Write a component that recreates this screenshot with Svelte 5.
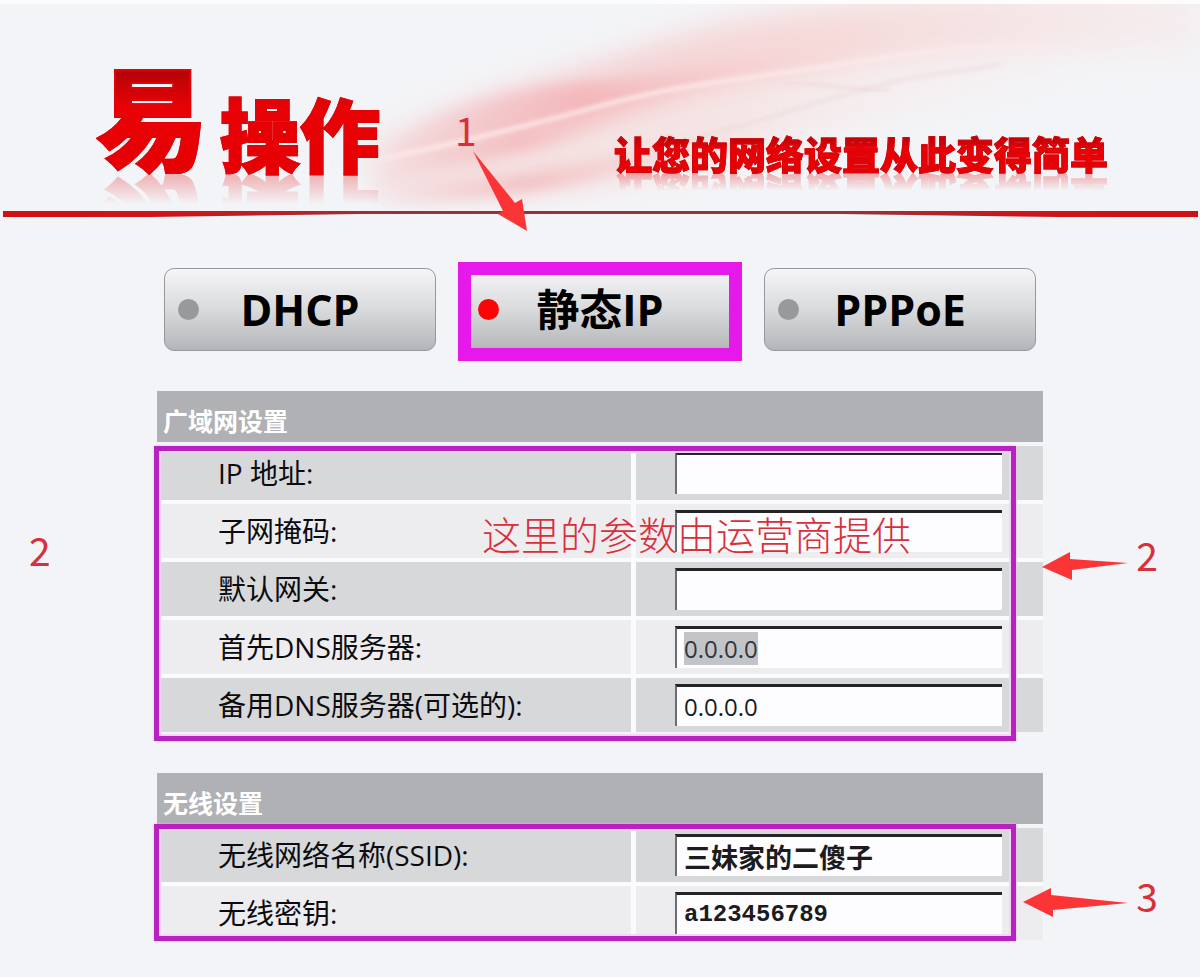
<script lang="ts">
  import { onMount } from 'svelte';

  const modes = ['DHCP', '静态IP', 'PPPoE'];
  let mode = $state('静态IP');

  let wan = $state([
    { id: 'ip', label: 'IP 地址:', value: '' },
    { id: 'mask', label: '子网掩码:', value: '' },
    { id: 'gateway', label: '默认网关:', value: '' },
    { id: 'dns1', label: '首先DNS服务器:', value: '0.0.0.0' },
    { id: 'dns2', label: '备用DNS服务器(可选的):', value: '0.0.0.0' }
  ]);

  let wifi = $state([
    { id: 'ssid', label: '无线网络名称(SSID):', value: '三妹家的二傻子' },
    { id: 'key', label: '无线密钥:', value: 'a123456789' }
  ]);

  onMount(() => {
    const dns = document.getElementById('dns1') as HTMLInputElement;
    dns.focus();
    dns.select();
  });
</script>

<div class="page">
  <header>
    <svg class="waves" viewBox="0 0 1200 211" preserveAspectRatio="none" aria-hidden="true">
      <defs>
        <linearGradient id="veil" x1="0" x2="1" y1="0" y2="0">
          <stop offset="0" stop-color="#f6b9bb" stop-opacity="0.2" />
          <stop offset="0.3" stop-color="#f6b8b9" stop-opacity="0.55" />
          <stop offset="0.6" stop-color="#f8cbc9" stop-opacity="0.6" />
          <stop offset="1" stop-color="#f7e4e3" stop-opacity="0.4" />
        </linearGradient>
        <linearGradient id="haze" x1="0" x2="1" y1="0" y2="0">
          <stop offset="0" stop-color="#f6c4c4" stop-opacity="0.5" />
          <stop offset="0.5" stop-color="#f8dcda" stop-opacity="0.5" />
          <stop offset="1" stop-color="#f7efef" stop-opacity="0" />
        </linearGradient>
        <linearGradient id="fold" x1="0" x2="1" y1="0" y2="0">
          <stop offset="0" stop-color="#f3a6a9" stop-opacity="0.1" />
          <stop offset="0.35" stop-color="#f2a3a7" stop-opacity="0.55" />
          <stop offset="1" stop-color="#f9dedd" stop-opacity="0" />
        </linearGradient>
        <filter id="soft"><feGaussianBlur stdDeviation="14" /></filter>
        <filter id="mid"><feGaussianBlur stdDeviation="7" /></filter>
        <filter id="thin"><feGaussianBlur stdDeviation="2" /></filter>
      </defs>
      <path d="M370 170C500 110 620 90 800 60S1000 45 1180 60C1000 85 860 120 760 150C620 195 480 205 380 195Z" fill="url(#haze)" filter="url(#soft)" />
      <path d="M350 150C470 85 560 75 640 45C740 10 850 -10 1200 -20V50C1100 45 930 50 850 60C700 85 500 150 370 168Z" fill="url(#veil)" filter="url(#soft)" />
      <path d="M380 150C440 100 520 80 620 78C760 60 860 30 960 30C900 60 800 70 720 80C620 105 500 140 380 158Z" fill="url(#fold)" filter="url(#mid)" />
      <path d="M400 160C500 140 600 108 740 78C720 98 640 108 560 140C520 152 450 165 400 168Z" fill="url(#fold)" filter="url(#mid)" />
      <path d="M380 195C500 180 560 168 640 150C700 135 740 120 800 110C760 140 690 150 610 175C520 198 440 200 380 200Z" fill="url(#fold)" filter="url(#mid)" />
      <path d="M380 158C440 146 520 126 600 104S720 80 850 60S980 45 1050 42" fill="none" stroke="#fdeaea" stroke-width="4" filter="url(#thin)" />
      <path d="M700 135C760 120 800 105 860 88S930 74 1000 62" fill="none" stroke="#ecd8d8" stroke-width="2" filter="url(#thin)" />
      <path d="M780 80C820 80 850 88 890 88" fill="none" stroke="#f0d4d4" stroke-width="2" filter="url(#thin)" />
    </svg>
    <h1><span class="lead">易</span><span>操作</span></h1>
    <p class="slogan">让您的网络设置从此变得简单</p>
  </header>

  <svg class="rule" viewBox="0 0 1200 6" preserveAspectRatio="none" aria-hidden="true">
    <defs>
      <linearGradient id="rule">
        <stop offset="0" stop-color="#cf1014" />
        <stop offset="0.15" stop-color="#cc161b" />
        <stop offset="0.35" stop-color="#91343b" />
        <stop offset="0.7" stop-color="#91343b" />
        <stop offset="0.85" stop-color="#cc161b" />
        <stop offset="1" stop-color="#cf1014" />
      </linearGradient>
    </defs>
    <path d="M3 0H1198V6H1060L840 3H360L150 6H3Z" fill="url(#rule)" />
  </svg>

  <main>
    <div class="modes">
      {#each modes as name}
        <button type="button" class:active={mode === name} onclick={() => (mode = name)}>
          <i class="lamp"></i>
          <span>{name}</span>
        </button>
      {/each}
      <span class="note step-1">1</span>
      <svg class="arrow arrow-1" viewBox="0 0 54 80" aria-hidden="true">
        <path d="M0 0L42 52L49 48L54 80L25 63L30 60Z" />
      </svg>
    </div>

    <section>
      <h2>广域网设置</h2>
      <div class="fields">
        {#each wan as field}
          <div class="row">
            <label for={field.id}>{field.label}</label>
            <div class="cell"><input type="text" id={field.id} bind:value={field.value} /></div>
          </div>
        {/each}
        <div class="frame wan-frame"></div>
        <span class="note hint">这里的参数由运营商提供</span>
        <span class="note step-2-left">2</span>
        <span class="note step-2">2</span>
        <svg class="arrow arrow-2" viewBox="0 0 86 28" aria-hidden="true">
          <path d="M0 15L28 0V7L86 11L30 18V28Z" />
        </svg>
      </div>
    </section>

    <section>
      <h2>无线设置</h2>
      <div class="fields">
        {#each wifi as field}
          <div class="row">
            <label for={field.id}>{field.label}</label>
            <div class="cell"><input type="text" id={field.id} class="typed" bind:value={field.value} /></div>
          </div>
        {/each}
        <div class="frame wifi-frame"></div>
        <span class="note step-3">3</span>
        <svg class="arrow arrow-3" viewBox="0 0 105 29" aria-hidden="true">
          <path d="M0 14L28 0V7L105 15L30 22V29Z" />
        </svg>
      </div>
    </section>
  </main>
</div>

<style>
  :global(body) {
    margin: 0;
    background: #f3f4f7;
  }

  .page {
    overflow: hidden;
    padding-bottom: 36px;
    color: #0c0c10;
    font-family: 'Open Sans', 'Noto Sans CJK SC', sans-serif;
  }

  header {
    position: relative;
    display: flex;
    justify-content: space-between;
    align-items: flex-end;
    box-sizing: border-box;
    height: 211px;
    padding: 0 92px 30px 96px;
    border-top: 4px solid #fcfcfd;
  }

  .waves {
    position: absolute;
    inset: 0;
    width: 100%;
    height: 100%;
  }

  h1,
  .slogan {
    position: relative;
    margin: 0;
    font-family: 'Noto Sans CJK SC', sans-serif;
    font-weight: 900;
    color: transparent;
    background: linear-gradient(#9d0508, #e80206 40%, #e60004);
    -webkit-background-clip: text;
    background-clip: text;
    -webkit-text-stroke: 2px #e00408;
    -webkit-box-reflect: below -14px linear-gradient(transparent 70%, rgba(0, 0, 0, 0.35));
  }

  h1 {
    display: flex;
    align-items: flex-end;
    gap: 12px;
    padding-bottom: 12px;
    font-size: 80px;
    line-height: 76px;
  }

  .lead {
    font-size: 112px;
    line-height: 112px;
  }

  .slogan {
    margin-bottom: 6px;
    font-size: 38px;
    line-height: 44px;
    -webkit-text-stroke: 1px #d6060c;
    -webkit-box-reflect: below -4px linear-gradient(transparent 55%, rgba(0, 0, 0, 0.35));
  }

  .rule {
    display: block;
    width: 100%;
    height: 6px;
  }

  main {
    max-width: 886px;
    margin: 0 auto;
    padding-top: 51px;
  }

  .modes {
    position: relative;
    display: flex;
    justify-content: center;
    gap: 28px;
    padding: 0 7px;
    margin-bottom: 40px;
  }

  button {
    position: relative;
    flex: 1;
    display: grid;
    grid-template-columns: 21px 1fr 21px;
    align-items: center;
    height: 83px;
    padding: 0 13px;
    border: 1px solid #97989b;
    border-radius: 10px;
    background: linear-gradient(#f5f5f7, #d9dadc 50%, #b4b5b8);
    color: #000;
    font: bold 43px/48px 'Open Sans', 'Noto Sans CJK SC', sans-serif;
  }

  .lamp {
    width: 21px;
    height: 21px;
    border-radius: 50%;
    background: #98999b;
  }

  .active .lamp {
    background: #fb0507;
  }

  .active::after {
    content: '';
    position: absolute;
    inset: -7px -7px -11px;
    border: 13px solid #e619ea;
  }

  section {
    margin-bottom: 41px;
  }

  section:last-child {
    margin-bottom: 0;
  }

  h2 {
    box-sizing: border-box;
    height: 51px;
    margin: 0 0 4px;
    padding: 12px 6px 0;
    background: #b0b1b4;
    color: #fff;
    font-size: 25px;
    line-height: 36px;
  }

  .fields {
    position: relative;
    display: grid;
    gap: 4px;
    background: #fafbfd;
  }

  .row {
    display: grid;
    grid-template-columns: 474fr 407fr;
    gap: 5px;
  }

  label,
  .cell {
    height: 54px;
    box-sizing: border-box;
    background: #d7d8da;
  }

  .row:nth-child(even) > * {
    background: #ededef;
  }

  label {
    padding-left: 61px;
    font-size: 28px;
    line-height: 54px;
  }

  .cell {
    padding: 6px 41px 0 39px;
  }

  input {
    box-sizing: border-box;
    width: 100%;
    height: 42px;
    padding: 0 7px;
    border: 0;
    border-top: 3px solid #242428;
    border-left: 2px solid #6c6d72;
    border-radius: 0;
    outline: 0;
    background: #fdfdff;
    color: #1b1b20;
    font: 24px/30px 'Open Sans', 'Noto Sans CJK SC', sans-serif;
  }

  input::selection {
    background: #c3c4c7;
    color: #35353a;
  }

  .typed {
    font: bold 24px/30px 'Liberation Mono', 'Noto Sans CJK SC', monospace;
  }

  #ssid {
    font-size: 27px;
  }

  .frame {
    position: absolute;
    border: 5px solid #b822c0;
    box-shadow: 0 0 2px #f6b4f9, inset 0 0 0 2px #f6d5f8;
    pointer-events: none;
  }

  .wan-frame {
    inset: 0 27px -9px -3px;
  }

  .wifi-frame {
    inset: -4px 27px -1px -3px;
  }

  .note {
    position: absolute;
    color: #d92f3a;
    font-family: 'Noto Sans CJK SC', sans-serif;
    font-size: 39px;
    line-height: 40px;
    white-space: nowrap;
    pointer-events: none;
  }

  .hint {
    top: 67px;
    left: 325px;
    font-weight: 300;
  }

  .step-1 {
    top: -159px;
    left: 298px;
  }

  .step-2-left {
    top: 83px;
    left: -128px;
  }

  .step-2 {
    top: 88px;
    right: -115px;
  }

  .step-3 {
    top: 47px;
    right: -115px;
  }

  .arrow {
    position: absolute;
    fill: #fb3436;
    pointer-events: none;
  }

  .arrow-1 {
    top: -117px;
    left: 316px;
    width: 54px;
  }

  .arrow-2 {
    top: 106px;
    right: -85px;
    width: 86px;
  }

  .arrow-3 {
    top: 60px;
    right: -85px;
    width: 105px;
  }
</style>
